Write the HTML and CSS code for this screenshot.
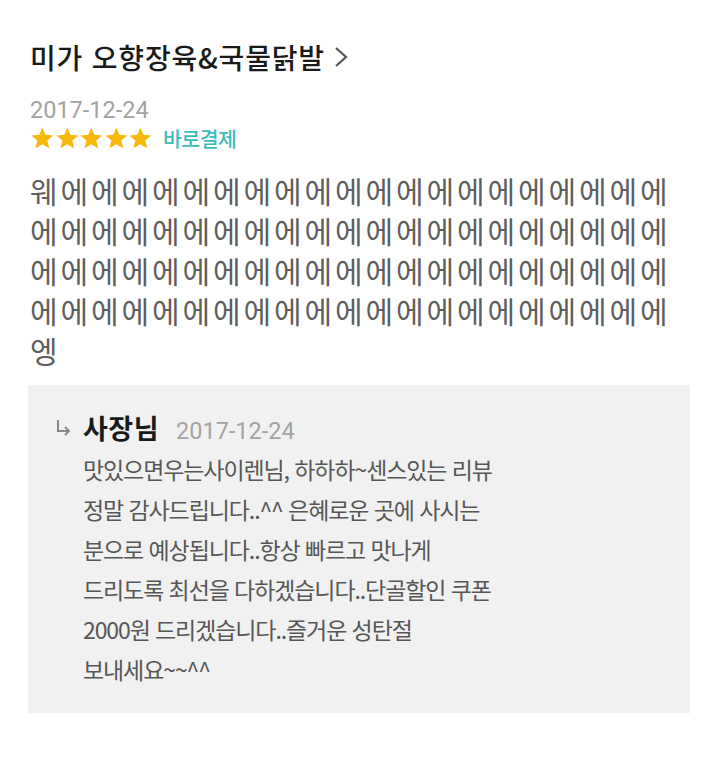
FILE: index.html
```html
<!DOCTYPE html>
<html lang="ko">
<head>
<meta charset="utf-8">
<link rel="stylesheet" href="styles.css">
</head>
<body>
<div class="page">
  <h1 class="title">미가 오향장육&amp;국물닭발<svg class="chev" width="16" height="22" viewBox="0 0 16 22"><path d="M3 2 L13 11 L3 20" fill="none" stroke="#555" stroke-width="2.2"/></svg></h1>
  <div class="date">2017-12-24</div>
  <div class="rating">
    <span class="stars">
      <svg viewBox="0 0 24 24" class="star"><path d="M12 1.5l3.1 7.3 7.9.6-6 5.2 1.9 7.7L12 18.2l-6.8 4.1 1.9-7.7-6-5.2 7.9-.6z"/></svg>
      <svg viewBox="0 0 24 24" class="star"><path d="M12 1.5l3.1 7.3 7.9.6-6 5.2 1.9 7.7L12 18.2l-6.8 4.1 1.9-7.7-6-5.2 7.9-.6z"/></svg>
      <svg viewBox="0 0 24 24" class="star"><path d="M12 1.5l3.1 7.3 7.9.6-6 5.2 1.9 7.7L12 18.2l-6.8 4.1 1.9-7.7-6-5.2 7.9-.6z"/></svg>
      <svg viewBox="0 0 24 24" class="star"><path d="M12 1.5l3.1 7.3 7.9.6-6 5.2 1.9 7.7L12 18.2l-6.8 4.1 1.9-7.7-6-5.2 7.9-.6z"/></svg>
      <svg viewBox="0 0 24 24" class="star"><path d="M12 1.5l3.1 7.3 7.9.6-6 5.2 1.9 7.7L12 18.2l-6.8 4.1 1.9-7.7-6-5.2 7.9-.6z"/></svg>
    </span>
    <span class="pay">바로결제</span>
  </div>
  <p class="review">웨에에에에에에에에에에에에에에에에에에에에<br>에에에에에에에에에에에에에에에에에에에에에<br>에에에에에에에에에에에에에에에에에에에에에<br>에에에에에에에에에에에에에에에에에에에에에<br>엥</p>
  <div class="reply">
    <svg class="arrow" width="18" height="20" viewBox="0 0 18 20"><path d="M3 2 V13 H14 M10 9 L14 13 L10 17" fill="none" stroke="#888" stroke-width="2"/></svg>
    <div class="reply-body">
      <div class="reply-head"><span class="owner">사장님</span><span class="rdate">2017-12-24</span></div>
      <p class="reply-text">맛있으면우는사이렌님, 하하하~센스있는 리뷰<br>정말 감사드립니다..^^ 은혜로운 곳에 사시는<br>분으로 예상됩니다..항상 빠르고 맛나게<br>드리도록 최선을 다하겠습니다..단골할인 쿠폰<br>2000원 드리겠습니다..즐거운 성탄절<br>보내세요~~^^</p>
    </div>
  </div>
</div>
</body>
</html>
```
FILE: styles.css
```css
html, body {
  margin: 0;
  background: #fff;
}
.page {
  padding: 40px 30px 0 30px;
  font-family: "Noto Sans CJK KR", "Noto Sans", sans-serif;
}
.title {
  margin: 0;
  font-size: 28px;
  line-height: 34px;
  font-weight: 500;
  color: #1a1a1a;
  letter-spacing: 0.8px;
  display: flex;
  align-items: center;
}
.chev {
  margin-left: 8px;
}
.date {
  margin-top: 22px;
  font-family: Roboto, "Noto Sans", sans-serif;
  font-size: 23.5px;
  line-height: 28px;
  color: #a3a3a3;
}
.rating {
  display: flex;
  align-items: center;
  height: 26px;
  margin-top: 1px;
}
.stars {
  display: flex;
}
.star {
  width: 24.6px;
  height: 24px;
  fill: #f6b80a;
}
.pay {
  margin-left: 10px;
  font-size: 20.5px;
  color: #3dbcbc;
  font-weight: 500;
  letter-spacing: -0.5px;
}
.review {
  margin: 19px 0 0 0;
  font-size: 30px;
  line-height: 40px;
  letter-spacing: 2.9px;
  color: #5e5e5e;
  white-space: nowrap;
}
.reply {
  margin: 15px 0 0 -2px;
  background: #f1f1f1;
  padding: 26px 20px 24px 27px;
  display: grid;
  grid-template-columns: 28px 1fr;
}
.arrow {
  margin-top: 7px;
}
.reply-head {
  display: flex;
  align-items: baseline;
  height: 34px;
  line-height: 34px;
}
.owner {
  font-size: 27px;
  font-weight: 700;
  color: #1a1a1a;
  letter-spacing: 0.5px;
}
.rdate {
  margin-left: 17px;
  font-family: Roboto, "Noto Sans", sans-serif;
  font-size: 23.5px;
  color: #a3a3a3;
}
.reply-text {
  margin: 4px 0 0 0;
  font-size: 23px;
  line-height: 40px;
  letter-spacing: -1.1px;
  color: #575757;
  white-space: nowrap;
}
```
